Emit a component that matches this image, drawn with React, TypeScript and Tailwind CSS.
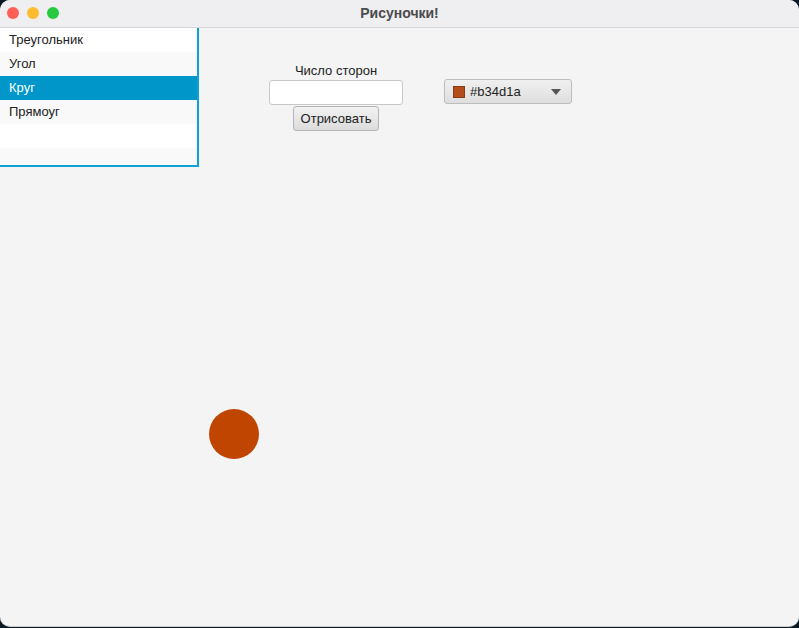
import React, {useState} from 'react';

const shapes = ['Треугольник', 'Угол', 'Круг', 'Прямоуг'];

const App: React.FC = () => {
    const [selected, setSelected] = useState(2);
    const [sides, setSides] = useState('');

    return (
        <div className="w-[799px] h-[628px] bg-[#0b1a24] overflow-hidden" style={{fontFamily: '"Liberation Sans", Arial, sans-serif'}}>
            <div className="w-full h-[627px] flex flex-col bg-[#f4f4f4] rounded-b-[10px] rounded-t-[10px] overflow-hidden border-b border-[#c9cdd1]">
                {/* заголовок окна */}
                <div className="relative h-[28px] shrink-0 bg-[#efeff1] border-b border-[#d6d6d8] flex items-center justify-center">
                    <div className="absolute left-[7px] top-[7px] flex gap-[8px]">
                        <span className="w-[12px] h-[12px] rounded-full bg-[#fe5f57]" />
                        <span className="w-[12px] h-[12px] rounded-full bg-[#febc2e]" />
                        <span className="w-[12px] h-[12px] rounded-full bg-[#28c840]" />
                    </div>
                    <span className="text-[14px] font-bold text-[#4b4b4d]">Рисуночки!</span>
                </div>

                <div className="relative flex-1">
                    <div className="flex items-start">
                        {/* список фигур */}
                        <div className="w-[201px] h-[139px] border-2 border-t-0 border-[#0ea2d6] bg-white flex flex-col -ml-[2px] overflow-hidden">
                            {[0, 1, 2, 3, 4, 5].map((i) => {
                                const isSel = i === selected && i < shapes.length;
                                const bg = isSel ? 'bg-[#0096c9] text-white' : i % 2 === 1 ? 'bg-[#f9f9f9] text-[#222]' : 'bg-white text-[#222]';
                                return (
                                    <div
                                        key={i}
                                        onClick={() => i < shapes.length && setSelected(i)}
                                        className={`h-[24px] shrink-0 flex items-center pl-[9px] text-[13px] ${bg}`}
                                    >
                                        {shapes[i] ?? ''}
                                    </div>
                                );
                            })}
                        </div>

                        {/* число сторон */}
                        <div className="ml-[70px] mt-[35px] w-[134px] flex flex-col items-center">
                            <span className="text-[13px] text-[#222] leading-[16px]">Число сторон</span>
                            <input
                                value={sides}
                                onChange={(e) => setSides(e.target.value)}
                                className="mt-[1px] w-[134px] h-[25px] bg-white border border-[#c8c8c8] rounded-[3px] outline-none px-2 text-[13px]"
                            />
                            <button className="mt-[1px] w-[86px] h-[25px] border border-[#b5b5b5] rounded-[3px] bg-gradient-to-b from-[#f2f2f2] to-[#dcdcdc] text-[13px] text-[#222]">
                                Отрисовать
                            </button>
                        </div>

                        {/* выбор цвета */}
                        <div className="ml-[41px] mt-[51px] w-[128px] h-[25px] border border-[#bdbdbd] rounded-[3px] bg-gradient-to-b from-[#f0f0f0] to-[#dedede] flex items-center px-[8px]">
                            <span className="w-[12px] h-[12px] bg-[#b34d1a] border border-[#8a3a12]" />
                            <span className="ml-[5px] text-[13px] text-[#222]">#b34d1a</span>
                            <svg className="ml-auto mr-[2px]" width="10" height="6" viewBox="0 0 10 6">
                                <path d="M0 0 L10 0 L5 6 Z" fill="#555" />
                            </svg>
                        </div>
                    </div>

                    {/* нарисованная фигура */}
                    <div className="absolute left-[209px] top-[381px] w-[50px] h-[50px] rounded-full bg-[#c04500]" />
                </div>
            </div>
        </div>
    );
};

export default App;
